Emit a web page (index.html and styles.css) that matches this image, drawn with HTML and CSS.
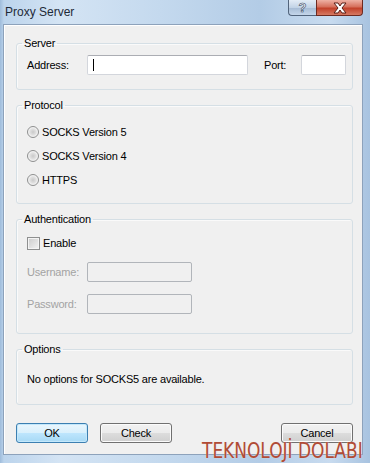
FILE: index.html
```html
<!DOCTYPE html>
<html lang="en">
<head>
    <meta charset="UTF-8">
    <title>Proxy Server</title>
    <link rel="stylesheet" href="styles.css">
</head>
<body>
    <div class="window">
        <div class="titlebar">
            <span class="title">Proxy Server</span>
            <div class="caption-buttons">
                <div class="cap-btn help">?</div>
                <div class="cap-btn close">
                    <svg width="16" height="12" viewBox="0 0 16 12">
                        <path d="M2 1 H6 L8 4 L10 1 H14 L10 6 L14 11 H10 L8 8 L6 11 H2 L6 6 Z" fill="#fff" stroke="#5a2018" stroke-width="1" stroke-linejoin="round"/>
                    </svg>
                </div>
            </div>
        </div>

        <div class="client">
            <fieldset class="group">
                <legend>Server</legend>
                <div class="group-body server-body">
                    <div class="row">
                        <span class="lbl">Address:</span>
                        <div class="textbox address"><span class="caret"></span></div>
                        <span class="lbl port-lbl">Port:</span>
                        <div class="textbox port"></div>
                    </div>
                </div>
            </fieldset>

            <fieldset class="group">
                <legend>Protocol</legend>
                <div class="group-body protocol-body">
                    <div class="option"><span class="radio"></span>SOCKS Version 5</div>
                    <div class="option"><span class="radio"></span>SOCKS Version 4</div>
                    <div class="option"><span class="radio"></span>HTTPS</div>
                </div>
            </fieldset>

            <fieldset class="group">
                <legend>Authentication</legend>
                <div class="group-body auth-body">
                    <div class="option check-row"><span class="checkbox"></span>Enable</div>
                    <div class="row user-row">
                        <span class="lbl disabled">Username:</span>
                        <div class="textbox off"></div>
                    </div>
                    <div class="row pass-row">
                        <span class="lbl disabled">Password:</span>
                        <div class="textbox off"></div>
                    </div>
                </div>
            </fieldset>

            <fieldset class="group">
                <legend>Options</legend>
                <div class="group-body options-body">
                    <div class="note">No options for SOCKS5 are available.</div>
                </div>
            </fieldset>

            <div class="buttons">
                <div class="btn default">OK</div>
                <div class="btn">Check</div>
                <div class="btn cancel">Cancel</div>
            </div>
        </div>

        <div class="watermark">TEKNOLOJİ DOLABI</div>
    </div>
</body>
</html>
```

FILE: styles.css
```css
body, html {
    margin: 0;
    padding: 0;
    width: 100%;
    height: 100%;
}
body {
    font-family: "Liberation Sans", Arial, sans-serif;
    font-size: 11px;
    color: #000;
}
.window {
    position: relative;
    width: 370px;
    height: 463px;
    box-sizing: border-box;
    padding-bottom: 8px;
    display: flex;
    flex-direction: column;
    background: linear-gradient(90deg, #9fbcdb 0px, #bcd4ec 4px, #d4e4f4 60px, #c4d9ee 160px, #b3cce6 260px, #c8dbef 330px, #a8c3e0 370px);
    overflow: hidden;
}

/* title bar */
.titlebar {
    height: 24px;
    display: flex;
    align-items: flex-start;
    flex-shrink: 0;
}
.title {
    font-size: 12px;
    line-height: 14px;
    padding: 5px 0 0 5px;
    color: #1e2a38;
}
.caption-buttons {
    margin-left: auto;
    margin-right: 7px;
    display: flex;
    height: 16px;
}
.cap-btn {
    height: 15px;
    border: 1px solid #52647c;
    border-top: none;
    display: flex;
    align-items: center;
    justify-content: center;
}
.help {
    width: 27px;
    border-radius: 0 0 0 4px;
    background: linear-gradient(#e3ecf6, #c2d3e6 50%, #a8bdd6 55%, #c4d6ea);
    color: #fff;
    font-weight: bold;
    font-size: 13px;
    -webkit-text-stroke: 0.6px #33475f;
    border-right: none;
}
.close {
    width: 45px;
    border-color: #6e2a20;
    border-radius: 0 0 4px 0;
    background: linear-gradient(#eeb1a4, #d6705c 45%, #c2412a 55%, #d67a63);
}

/* client area */
.client {
    flex: 1;
    margin: 0 7px 0 3px;
    border: 1px solid #8da2bb;
    background: #f0f0f0;
    padding: 11px 9px 0 12px;
    box-shadow: inset 1px 1px 0 #fff;
    letter-spacing: -0.2px;
}
.group {
    margin: 0;
    padding: 0;
    border: 1px solid #d5dfe5;
    border-radius: 3px;
    min-width: 0;
    box-shadow: inset 1px 1px 0 #fafafa;
}
.group + .group {
    margin-top: 8px;
}
.group legend {
    margin-left: 5px;
    padding: 0 2px;
    line-height: 14px;
    font-size: 11px;
}
.group-body {
    padding-left: 10px;
}
.server-body {
    padding-top: 5px;
    padding-bottom: 14px;
}
.protocol-body {
    padding-top: 10px;
    padding-bottom: 13px;
    display: flex;
    flex-direction: column;
    gap: 4px;
}
.auth-body {
    padding-top: 8px;
    padding-bottom: 19px;
}
.options-body {
    padding-top: 15px;
    padding-bottom: 17px;
}

.row {
    display: flex;
    align-items: center;
    height: 20px;
}
.lbl {
    width: 60px;
    flex-shrink: 0;
}
.lbl.disabled {
    color: #a3a3a3;
}
.port-lbl {
    width: 37px;
    margin-left: 16px;
}
.user-row {
    margin-top: 10px;
}
.pass-row {
    margin-top: 12px;
}

.textbox {
    box-sizing: border-box;
    height: 20px;
    background: #fff;
    border: 1px solid #d3d6dc;
    border-top-color: #abadb3;
    border-radius: 2px;
    display: flex;
    align-items: center;
}
.address {
    width: 161px;
}
.port {
    width: 45px;
}
.textbox.off {
    width: 105px;
    background: #f0f0f0;
    border-color: #b1b5ba;
}
.caret {
    width: 1px;
    height: 12px;
    margin-left: 5px;
    background: #000;
}

.option {
    display: flex;
    align-items: center;
    height: 20px;
}
.radio {
    box-sizing: border-box;
    width: 12px;
    height: 12px;
    border-radius: 50%;
    border: 1px solid #8e8f8f;
    background: radial-gradient(circle at 50% 50%, #c9c9c9 0, #e0e0e0 3px, #f6f6f6 5px);
    margin-right: 3px;
}
.check-row {
    height: 18px;
}
.checkbox {
    box-sizing: border-box;
    width: 13px;
    height: 13px;
    border: 1px solid #8e8f8f;
    background: linear-gradient(135deg, #cbcbcb, #f4f4f4);
    box-shadow: inset 0 0 0 1px #f4f4f4;
    margin-right: 3px;
}
.note {
    line-height: 16px;
}

/* dialog buttons */
.buttons {
    display: flex;
    gap: 12px;
    margin-top: 18px;
}
.btn {
    box-sizing: border-box;
    width: 72px;
    height: 20px;
    border: 1px solid #707070;
    border-radius: 3px;
    background: linear-gradient(#f2f2f2, #ebebeb 50%, #dddddd 50%, #cfcfcf);
    box-shadow: inset 0 0 0 1px #fbfbfb;
    display: flex;
    align-items: center;
    justify-content: center;
}
.btn.default {
    border-color: #3c7fb1;
    background: linear-gradient(#eaf6fd, #d9f0fc 50%, #bee6fd 50%, #a7d9f5);
    box-shadow: inset 0 0 0 1px #c4e8fb;
}
.btn.cancel {
    margin-left: auto;
}

/* overlay */
.watermark {
    position: absolute;
    left: 202px;
    top: 440px;
    font-family: "DejaVu Sans Condensed", "Liberation Sans", sans-serif;
    font-size: 21px;
    line-height: 22px;
    color: #b04b36;
    text-shadow: 0 0 1px #f4e2dc;
    white-space: nowrap;
    transform: scaleX(0.9);
    transform-origin: left top;
}
```
